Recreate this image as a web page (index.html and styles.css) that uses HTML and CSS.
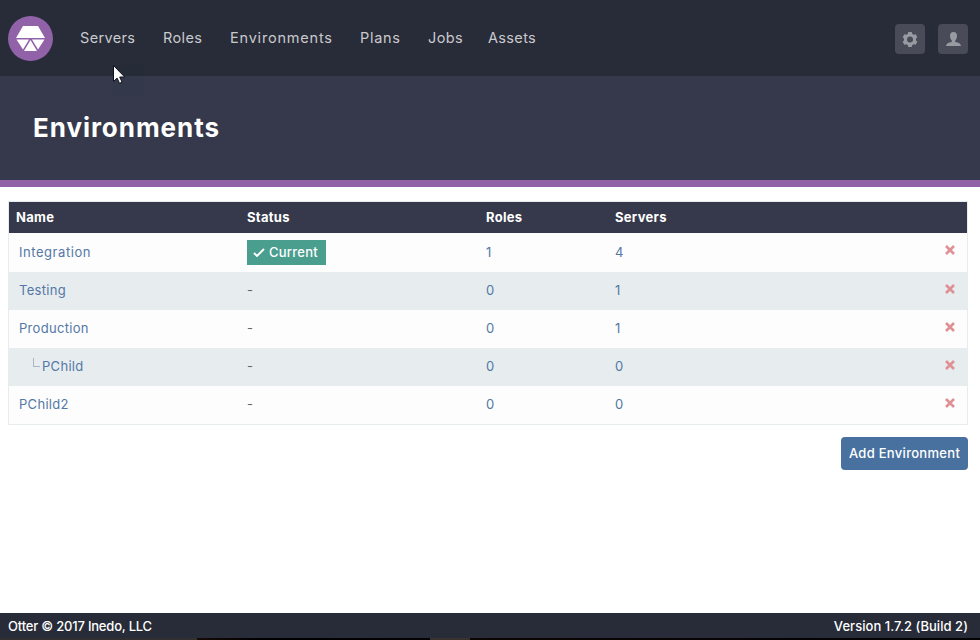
FILE: index.html
```html
<!DOCTYPE html>
<html lang="en">
<head>
<meta charset="utf-8">
<title>Environments</title>
<link rel="stylesheet" href="styles.css">
</head>
<body>
<header class="topbar">
  <svg class="logo" viewBox="0 0 45 45"><circle cx="22.5" cy="22.5" r="22.5" fill="#9162a8"/><path fill="#fff" d="M15 10h15l7 12H8zM8.500 23.500h12.500l-6 10zM24 23.500h12.500l-6.500 10zM22.500 24l6.500 11h-13z"/></svg>
  <nav class="nav">
    <a class="nav-servers">Servers</a><a class="nav-roles">Roles</a><a class="nav-environments">Environments</a><a class="nav-plans">Plans</a><a class="nav-jobs">Jobs</a><a class="nav-assets">Assets</a>
  </nav>
  <div class="tools">
    <span class="tool"><svg viewBox="0 0 30 30"><g fill="#989ba1"><path id="tooth" d="M13.300 8h3.400l1 3.500h-5.400z"/><use href="#tooth" transform="rotate(60 15 15.500)"/><use href="#tooth" transform="rotate(120 15 15.500)"/><use href="#tooth" transform="rotate(180 15 15.500)"/><use href="#tooth" transform="rotate(240 15 15.500)"/><use href="#tooth" transform="rotate(300 15 15.500)"/></g><circle cx="15" cy="15.500" r="4.500" fill="#494c58" stroke="#989ba1" stroke-width="3"/></svg></span>
    <span class="tool"><svg viewBox="0 0 30 30"><path fill="#989ba1" d="M15.500 8c2.500 0 3.700 1.700 3.500 4.300-.2 2-.8 3.400-1.800 4.300v1.400c3.500.5 5.600 1.600 5.800 4H8c.2-2.400 2.300-3.500 5.800-4v-1.400c-1-.9-1.600-2.300-1.800-4.300C11.800 9.700 13 8 15.500 8z"/></svg></span>
  </div>
</header>
<div class="hero"><h1>Environments</h1></div>
<main>
  <div class="table">
    <div class="row head"><span>Name</span><span>Status</span><span>Roles</span><span>Servers</span><span></span></div>
    <div class="row first"><a class="wide">Integration</a><span><b class="badge"><svg viewBox="0 0 12 9"><path d="M1 5l3 3 7-7" fill="none" stroke="#fff" stroke-width="1.900"/></svg>Current</b></span><a>1</a><a>4</a><svg class="del" viewBox="0 0 10 10"><path d="M1 1l8 8m0-8l-8 8"/></svg></div>
    <div class="row alt"><a>Testing</a><span>-</span><a>0</a><a>1</a><svg class="del" viewBox="0 0 10 10"><path d="M1 1l8 8m0-8l-8 8"/></svg></div>
    <div class="row"><a>Production</a><span>-</span><a>0</a><a>1</a><svg class="del" viewBox="0 0 10 10"><path d="M1 1l8 8m0-8l-8 8"/></svg></div>
    <div class="row alt"><a class="child"><i class="branch"></i>PChild</a><span>-</span><a>0</a><a>0</a><svg class="del" viewBox="0 0 10 10"><path d="M1 1l8 8m0-8l-8 8"/></svg></div>
    <div class="row"><a>PChild2</a><span>-</span><a>0</a><a>0</a><svg class="del" viewBox="0 0 10 10"><path d="M1 1l8 8m0-8l-8 8"/></svg></div>
  </div>
  <button class="add">Add Environment</button>
</main>
<footer class="footer"><span>Otter © 2017 Inedo, LLC</span><span class="version">Version 1.7.2 (Build 2)</span></footer>
<div class="edge"></div>
<div class="cursor"><svg viewBox="0 0 12 19"><path d="M.5.5v16l3.600-3.400 2.400 5.200 2.600-1.100-2.400-5.200h5z" fill="#fff" stroke="#10121d"/></svg></div>
</body>
</html>
```
FILE: styles.css
```css
* { box-sizing: border-box; }
body { margin: 0; height: 640px; overflow: hidden; display: flex; flex-direction: column; background: #fff; font: 13px/20px Inter, sans-serif; letter-spacing: .3px; }
svg { display: block; }
.topbar { height: 76px; background: #282b38; display: flex; align-items: center; padding: 0 12px 0 8px; flex: none; }
.logo { width: 45px; height: 45px; }
.nav { display: flex; margin-left: 27px; color: #c9cacd; font-size: 14.5px; letter-spacing: .35px; white-space: nowrap; }
.nav-servers { width: 83px; }
.nav-roles { width: 67px; }
.nav-environments { width: 130px; letter-spacing: .8px; }
.nav-plans { width: 68px; letter-spacing: .7px; }
.nav-jobs { width: 60px; }
.tools { margin-left: auto; margin-top: 2px; display: flex; gap: 13px; }
.tool { width: 30px; height: 30px; border-radius: 4px; background: #494c58; }
.hero { height: 111px; background: #36394b; border-bottom: 7px solid #9162a8; padding: 36px 33px; flex: none; }
h1 { margin: 0; color: #fff; font-size: 26px; line-height: 32px; letter-spacing: .95px; font-weight: 700; }
main { flex: 1; padding: 14px 12px 0 8px; display: flex; flex-direction: column; align-items: flex-start; }
.table { width: 960px; border: 1px solid #e7ecef; }
.row { display: grid; grid-template-columns: 228px 239px 129px 320px 1fr; align-items: center; height: 38px; padding: 0 0 2px 10px; background: #fdfdfd; color: #666; }
.row a { color: #5378a6; }
.row .wide { letter-spacing: .55px; }
.row.first { height: 39px; padding-bottom: 1px; }
.row.alt { background: #e7ecef; }
.row.head { height: 31px; padding: 0 0 1px 7px; grid-template-columns: 231px 239px 129px 1fr 0; background: #36394b; color: #fff; font-weight: 700; }
.badge { display: inline-flex; align-items: center; width: 79px; height: 25px; padding-left: 6px; gap: 4px; background: #499e8e; color: #fff; font-weight: 500; letter-spacing: .25px; vertical-align: middle; }
.row.first > span { height: 25px; }
.badge svg { width: 12px; height: 9px; }
.child { display: flex; padding-left: 14px; }
.branch { width: 7px; height: 9px; margin: 2px 2px 0 0; border: solid #a9b7c8; border-width: 0 0 1px 1px; }
.del { width: 10px; height: 10px; margin: -2px 0 0 10px; fill: none; stroke: #df9094; stroke-width: 2.6; }
.first .del { margin-top: -5px; }
.add { width: 127px; height: 33px; align-self: flex-end; margin-top: 12px; padding: 0 0 1px; border: 0; border-radius: 4px; background: #48719f; color: #fff; font: 500 13px/20px Inter, sans-serif; letter-spacing: .3px; white-space: nowrap; }
.footer { height: 25px; padding: 0 12px 0 8px; display: flex; align-items: center; justify-content: space-between; background: #282b38; color: #fff; font-weight: 500; font-size: 13px; letter-spacing: -.2px; flex: none; }
.version { letter-spacing: .05px; }
.edge { height: 2px; flex: none; background: linear-gradient(90deg, #322f30 197px, #160a06 197px, #000 260px, #050202 430px, #39312e 430px, #39312e 470px, #0a0402 470px, #030303); }
.cursor { position: absolute; left: 113px; top: 65px; width: 32px; height: 31px; background: #1f323b14; }
.cursor svg { width: 12px; height: 19px; }
```
